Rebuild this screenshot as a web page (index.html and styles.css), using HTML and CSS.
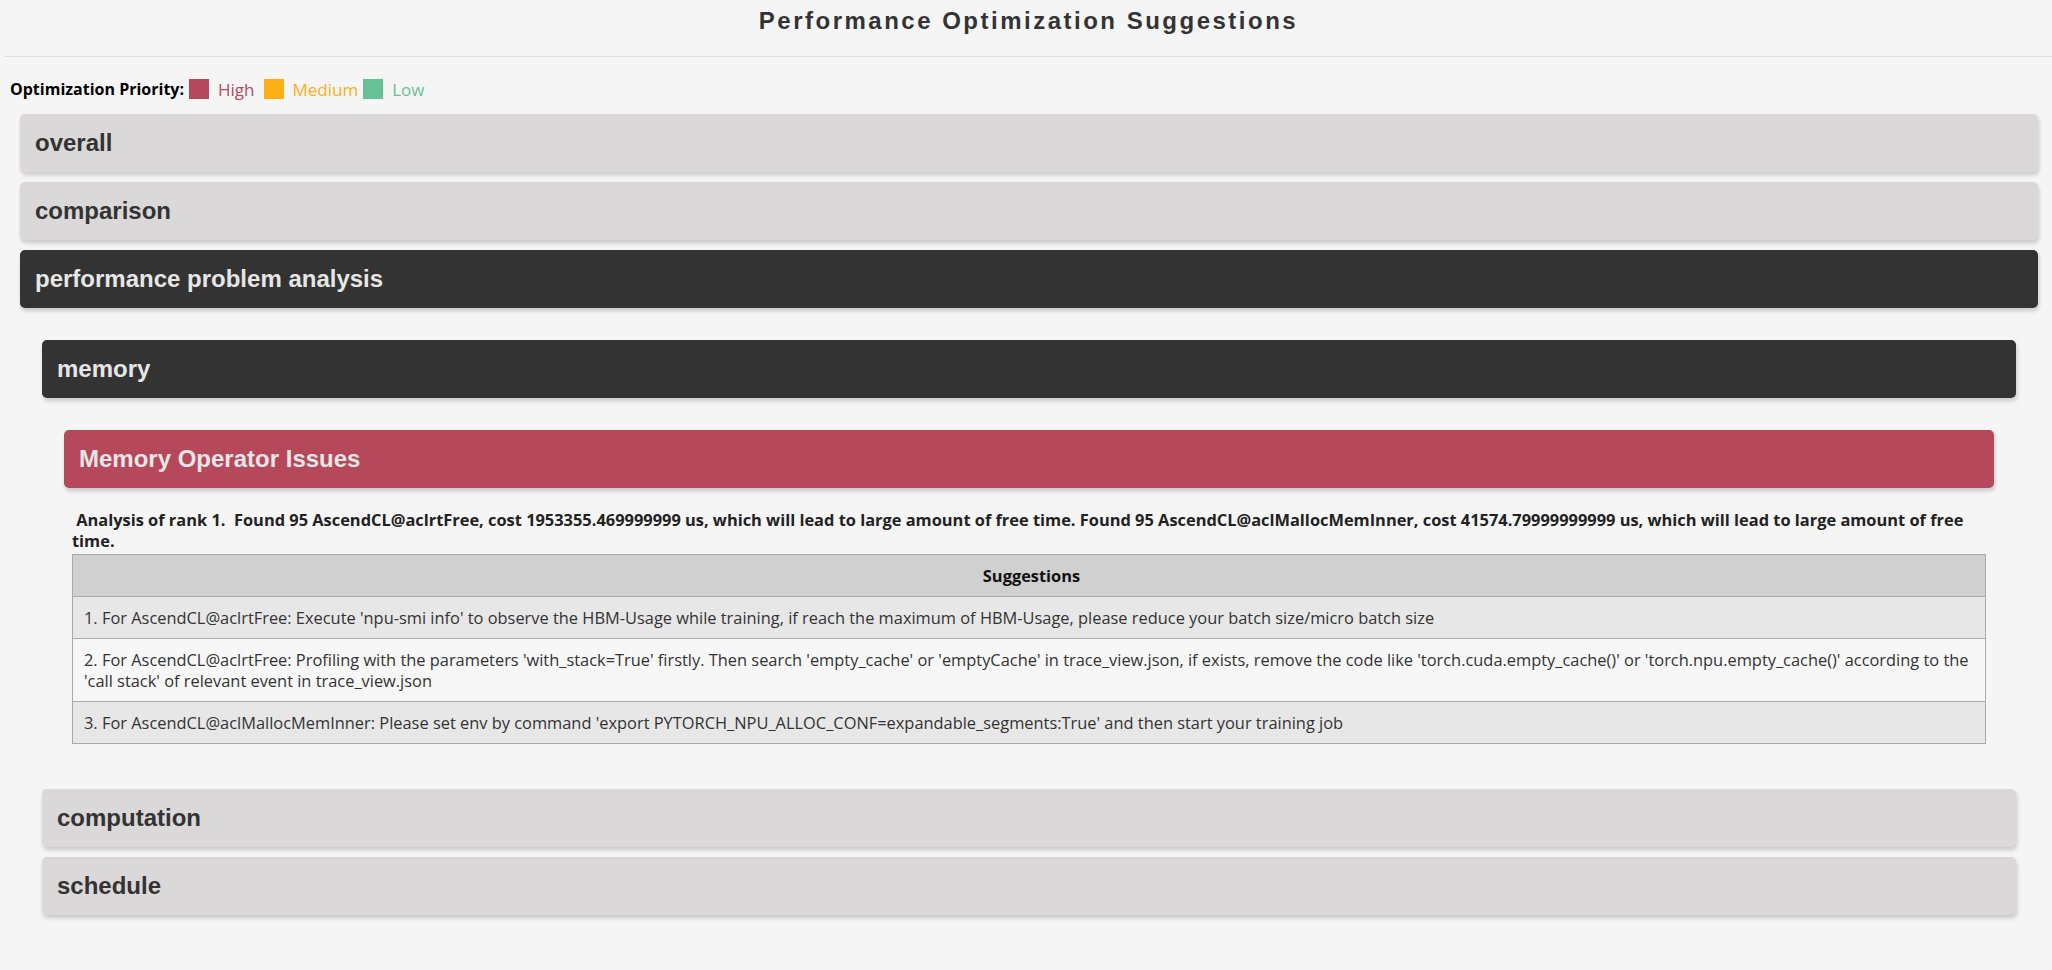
FILE: index.html
```html
<!DOCTYPE html>
<html lang="en">
<head>
  <meta charset="UTF-8">
  <meta name="viewport" content="width=device-width, initial-scale=1.0">
  <title>Performance Optimization Suggestions</title>
  <link rel="stylesheet" href="styles.css">
</head>
<body>
  <div class="page-header">
    <h1>Performance Optimization Suggestions</h1>
  </div>

  <div class="legend">
    <span class="legend-label">Optimization Priority:</span>
    <span class="legend-box high"></span>
    <span class="legend-text high-text">High</span>
    <span class="legend-box medium"></span>
    <span class="legend-text medium-text">Medium</span>
    <span class="legend-box low"></span>
    <span class="legend-text low-text">Low</span>
  </div>

  <div class="section">
    <div class="section-title">overall</div>
  </div>

  <div class="section">
    <div class="section-title">comparison</div>
  </div>

  <div class="section">
    <div class="section-title active">performance problem analysis</div>
    <div class="section-body">

      <div class="section">
        <div class="section-title active">memory</div>
        <div class="section-body memory-body">
          <div class="issue-title high">Memory Operator Issues</div>
          <div class="issue-body">
            <p class="issue-desc">&nbsp;Analysis of rank 1.&nbsp; Found 95 AscendCL@aclrtFree, cost 1953355.469999999 us, which will lead to large amount of free time. Found 95 AscendCL@aclMallocMemInner, cost 41574.79999999999 us, which will lead to large amount of free time.</p>
            <table class="suggest-table">
              <tr><th>Suggestions</th></tr>
              <tr><td>1. For AscendCL@aclrtFree: Execute 'npu-smi info' to observe the HBM-Usage while training, if reach the maximum of HBM-Usage, please reduce your batch size/micro batch size</td></tr>
              <tr><td>2. For AscendCL@aclrtFree: Profiling with the parameters 'with_stack=True' firstly. Then search 'empty_cache' or 'emptyCache' in trace_view.json, if exists, remove the code like 'torch.cuda.empty_cache()' or 'torch.npu.empty_cache()' according to the 'call stack' of relevant event in trace_view.json</td></tr>
              <tr><td>3. For AscendCL@aclMallocMemInner: Please set env by command 'export PYTORCH_NPU_ALLOC_CONF=expandable_segments:True' and then start your training job</td></tr>
            </table>
          </div>
        </div>
      </div>

      <div class="section">
        <div class="section-title">computation</div>
      </div>

      <div class="section">
        <div class="section-title">schedule</div>
      </div>

    </div>
  </div>
</body>
</html>
```

FILE: styles.css
```css
:root {
  --page-bg: #f5f5f5;
  --font-color: #333;
  --card-light: #dad8d9;
  --card-dark: #333333;
  --high: #b5495b;
  --medium: #fcaf17;
  --low: #65c294;
  --border-radius: 5px;
}

html, body {
  margin: 0;
  padding: 0;
  background: var(--page-bg);
  color: var(--font-color);
  font-family: "Open Sans", sans-serif;
}

.page-header {
  margin-left: 5px;
  padding: 7px 0 21px;
  border-bottom: 1px solid #dcdcdc;
  text-align: center;
}

.page-header h1 {
  margin: 0;
  font-family: "Liberation Sans", Arial, sans-serif;
  font-size: 24px;
  line-height: 28px;
  letter-spacing: 2.5px;
  color: #333;
}

.legend {
  display: flex;
  align-items: center;
  height: 20px;
  margin: 22px 0 15px 10px;
  font-size: 17px;
}

.legend-label {
  font-weight: bold;
  font-size: 16px;
  color: #000;
  margin-right: 5px;
}

.legend-box {
  width: 20px;
  height: 20px;
}

.legend-text {
  margin: 0 9px;
}

.high { background: var(--high); }
.medium { background: var(--medium); }
.low { background: var(--low); }
.high-text { color: var(--high); }
.medium-text { color: var(--medium); margin-right: 5px; }
.low-text { color: var(--low); }

.section {
  margin: 0 14px 10px 20px;
}

.section-body .section {
  margin: 0 0 10px;
}

.section-title,
.issue-title {
  padding: 15px;
  border-radius: var(--border-radius);
  box-shadow: 1px 3px 4px rgba(0, 0, 0, 0.18);
  font-family: "Liberation Sans", Arial, sans-serif;
  font-weight: bold;
  font-size: 24px;
  line-height: 28px;
  background: var(--card-light);
  color: #333;
}

.section-title.active {
  background: var(--card-dark);
  color: #e6e6e6;
}

.issue-title.high {
  background: var(--high);
  color: #e6e6e6;
}

.section-body {
  padding: 32px 22px 0;
}

.memory-body {
  padding-bottom: 35px;
}

.issue-body {
  padding: 0 8px;
}

.issue-desc {
  margin: 21px 0 3px;
  font-size: 16.4px;
  font-weight: bold;
  line-height: 21px;
  color: #222;
}

.suggest-table {
  width: 100%;
  border-collapse: collapse;
  font-size: 16.4px;
  line-height: 21px;
}

.suggest-table th,
.suggest-table td {
  border: 1px solid #aaa;
  padding: 10px 6px 10px 11px;
  text-align: left;
}

.suggest-table th {
  background: #d0d0d0;
  text-align: center;
  color: #111;
}

.suggest-table tr:nth-child(even) td {
  background: #e7e7e7;
}

.suggest-table tr:nth-child(odd) td {
  background: #f7f7f7;
}
```
